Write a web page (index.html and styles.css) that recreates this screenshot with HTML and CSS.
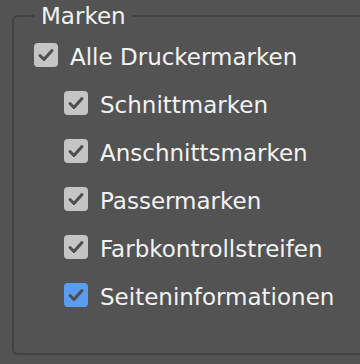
FILE: index.html
```html
<!DOCTYPE html>
<html lang="de">
<head>
<meta charset="utf-8">
<link rel="stylesheet" href="styles.css">
</head>
<body>
<fieldset class="group">
  <legend class="group-title">Marken</legend>
  <ul class="options">
    <li class="option">
      <span class="box"><svg viewBox="0 0 24 24"><path d="M6 12.5 L10 16.5 L18 7.5"/></svg></span>
      <span class="label">Alle Druckermarken</span>
    </li>
    <li class="option sub">
      <span class="box"><svg viewBox="0 0 24 24"><path d="M6 12.5 L10 16.5 L18 7.5"/></svg></span>
      <span class="label">Schnittmarken</span>
    </li>
    <li class="option sub">
      <span class="box"><svg viewBox="0 0 24 24"><path d="M6 12.5 L10 16.5 L18 7.5"/></svg></span>
      <span class="label">Anschnittsmarken</span>
    </li>
    <li class="option sub">
      <span class="box"><svg viewBox="0 0 24 24"><path d="M6 12.5 L10 16.5 L18 7.5"/></svg></span>
      <span class="label">Passermarken</span>
    </li>
    <li class="option sub">
      <span class="box"><svg viewBox="0 0 24 24"><path d="M6 12.5 L10 16.5 L18 7.5"/></svg></span>
      <span class="label">Farbkontrollstreifen</span>
    </li>
    <li class="option sub">
      <span class="box active"><svg viewBox="0 0 24 24"><path d="M6 12.5 L10 16.5 L18 7.5"/></svg></span>
      <span class="label">Seiteninformationen</span>
    </li>
  </ul>
</fieldset>
</body>
</html>
```

FILE: styles.css
```css
html, body {
  margin: 0;
  padding: 0;
  background: #535353;
  overflow: hidden;
  width: 360px;
  height: 364px;
}
body {
  font-family: "DejaVu Sans", "Open Sans", sans-serif;
  color: #f2f2f2;
}
.group {
  margin: 0 0 0 12px;
  padding: 0 0 0 20px;
  border: 2px solid #414141;
  border-right: none;
  border-radius: 6px 0 0 6px;
  height: 351px;
  box-sizing: content-box;
}
.group-title {
  padding: 0 7px;
  font-size: 23px;
  line-height: 32px;
  height: 32px;
}
.options {
  list-style: none;
  margin: 0;
  padding: 0;
  display: flex;
  flex-direction: column;
  gap: 24px;
  padding-top: 11px;
}
.option {
  display: flex;
  align-items: center;
  gap: 12px;
  height: 24px;
}
.option.sub {
  padding-left: 30px;
}
.box {
  width: 24px;
  height: 24px;
  border-radius: 4px;
  background: #c5c5c5;
  display: flex;
  flex: none;
}
.box.active {
  background: #5a9cf2;
}
.box svg {
  width: 24px;
  height: 24px;
  fill: none;
  stroke: #4e4e4e;
  stroke-width: 3;
  stroke-linecap: round;
  stroke-linejoin: round;
}
.label {
  font-size: 23px;
  line-height: 24px;
  white-space: nowrap;
  padding-top: 3px;
}
```
